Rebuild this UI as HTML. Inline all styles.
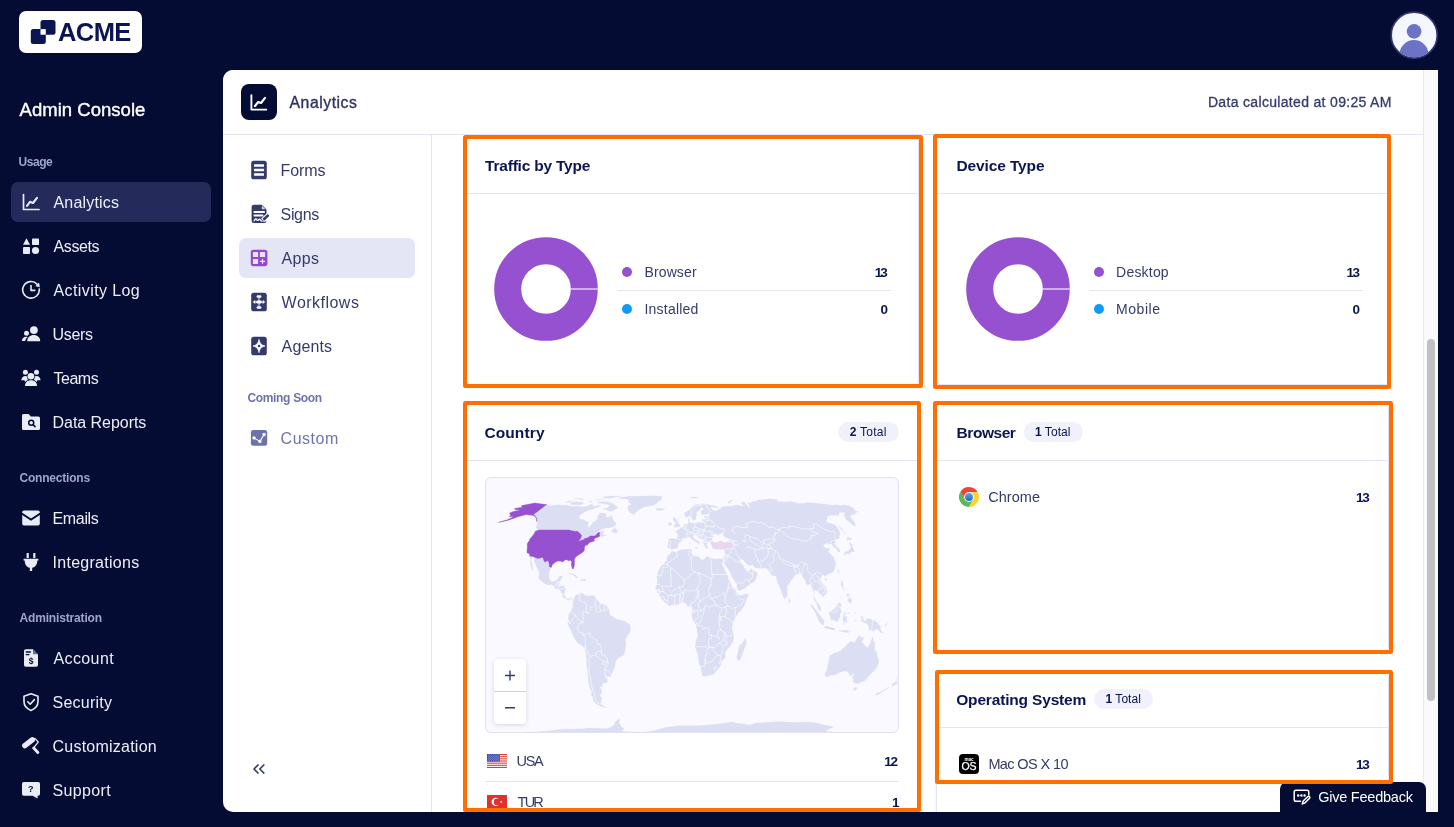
<!DOCTYPE html>
<html lang="en"><head><meta charset="utf-8"><title>Admin Console - Analytics</title>
<style>
*{box-sizing:border-box;margin:0;padding:0}
html,body{width:1454px;height:827px;overflow:hidden}
body{will-change:transform;background:#040c33;font-family:"Liberation Sans",sans-serif;position:relative;color:#343b6c}
.abs{position:absolute}

.logo{left:19px;top:11px;width:123px;height:42px;background:#fff;border-radius:7px}
.it{left:11px;width:200px;height:40px;border-radius:7px}
.it.on{background:#242b5b}
.it svg,.sn svg{position:absolute;left:10px;top:10px;width:20px;height:20px}
.panel{left:223px;top:70px;width:1215px;height:742px;background:#fff;border-radius:10px 0 0 10px;overflow:hidden}
.hdr{left:0;top:0;width:1215px;height:64px;background:#fff}
.hicon{left:18px;top:14px;width:36px;height:36px;border-radius:8px;background:#040c33}
.subnav{left:0;top:65px;width:209px;height:677px;border-right:1px solid #e3e5f5}
.sn{left:16px;width:176px;height:40px;border-radius:7px}
.sn.on{background:#e4e6f5}
.track{left:1200px;top:0;width:15px;height:742px;background:#fafafa;border-left:1px solid #e8e8e8}
.thumb{left:1204px;top:269px;width:8px;height:362px;border-radius:4px;background:#c1c1c1}
.card{background:#fff;border:1px solid #e3e5f5;border-radius:4px;box-shadow:0 2px 4px rgba(10,21,81,.06)}
.hl{border:4px solid #ff6f00;border-radius:2.5px}
.hr{height:1px;background:#e3e5f5}
.pill{height:20px;border-radius:10px;background:#f0f1fb}
.dot{width:10px;height:10px;border-radius:50%}
.fb{left:1057px;top:712px;width:146px;height:30px;background:#040c33;border-radius:7px 7px 0 0}
</style></head><body>

<!-- ===== Sidebar ===== -->
<div class="abs logo"><svg class="abs" style="left:11px;top:8px" width="26" height="26" viewBox="0 0 26 26"><rect x="0.8" y="10.1" width="15" height="15" rx="2.5" fill="#0a1551"/><rect x="10.5" y="0.9" width="15" height="14.800" rx="2.5" fill="#0a1551"/><rect x="10.5" y="10.1" width="5.3" height="5.600" fill="#fff"/></svg></div>
<span class="abs" style="left:57.90px;top:22px;font-size:25.5px;line-height:20px;letter-spacing:-0.533px;color:#0a1551;white-space:nowrap;font-weight:bold">ACME</span><span class="abs" style="left:19.60px;top:100px;font-size:18.5px;line-height:20px;letter-spacing:0.025px;color:#fff;white-space:nowrap;-webkit-text-stroke:0.4px #fff">Admin Console</span><span class="abs" style="left:18.50px;top:152px;font-size:12px;line-height:20px;letter-spacing:-0.450px;color:#9fa4ce;white-space:nowrap;font-weight:bold">Usage</span><div class="abs it on" style="top:182px"><svg viewBox="0 0 20 20"><g fill="none" stroke="#e9ebf7" stroke-width="1.7" stroke-linecap="round" stroke-linejoin="round"><path d="M2.5 2.5V17.5H18"/><path d="M6 13.8L9 9.8L12 11L16 5.8" stroke-width="2.1"/></g></svg></div><span class="abs" style="left:53.50px;top:193px;font-size:16px;line-height:20px;letter-spacing:0.175px;color:#eceef9;white-space:nowrap">Analytics</span><div class="abs it" style="top:226px"><svg viewBox="0 0 20 20"><g fill="#e9ebf7"><path d="M5.5 2.2L9 8.8H2Z"/><rect x="11" y="2.5" width="7" height="6.5" rx=".8"/><rect x="2" y="11" width="7" height="7" rx=".8"/><circle cx="14.5" cy="14.5" r="3.6"/></g></svg></div><span class="abs" style="left:53.50px;top:237px;font-size:16px;line-height:20px;letter-spacing:-0.380px;color:#eceef9;white-space:nowrap">Assets</span><div class="abs it" style="top:270px"><svg viewBox="0 0 20 20"><g fill="none" stroke="#e9ebf7" stroke-width="1.600" stroke-linecap="round" stroke-linejoin="round"><path d="M18.250 9A8.300 8.300 0 1 1 16 4.100"/><path d="M10 5.600V10.400H13.700"/></g><path d="M17.900 3.100L18.500 7L14.800 5.900Z" fill="#e9ebf7" stroke="#e9ebf7" stroke-width=".5" stroke-linejoin="round"/></svg></div><span class="abs" style="left:53.50px;top:281px;font-size:16px;line-height:20px;letter-spacing:0.400px;color:#eceef9;white-space:nowrap">Activity Log</span><div class="abs it" style="top:314px"><svg viewBox="0 0 20 20"><g fill="#e9ebf7"><circle cx="12.900" cy="6.100" r="3.900"/><path d="M6.200 17.300C6.200 13.400 9 11.100 12.700 11.100S19.200 13.400 19.200 17.300Z"/><circle cx="5.500" cy="9.300" r="2.500"/><path d="M0.900 17C1 14.500 2.600 12.800 5 12.800C5.600 12.800 6.200 12.900 6.600 13.100C5.200 14.200 4.500 15.600 4.300 17Z"/></g></svg></div><span class="abs" style="left:52.50px;top:325px;font-size:16px;line-height:20px;letter-spacing:-0.325px;color:#eceef9;white-space:nowrap">Users</span><div class="abs it" style="top:358px"><svg viewBox="0 0 20 20"><g fill="#e9ebf7"><circle cx="9.900" cy="8.300" r="3.300"/><path d="M4 17.900C4 14.400 6.500 12.300 10 12.300S16 14.400 16 17.900Z"/><circle cx="4.400" cy="4.300" r="2.500"/><circle cx="15.500" cy="4.300" r="2.500"/><path d="M0.300 12.200C0.500 9.600 2.100 7.900 4.400 7.900C5.100 7.900 5.700 8.100 6.200 8.400C6 9.800 6.400 11 7.200 11.900C5.900 12.300 4.900 13 4.100 14L3.500 12.200Z"/><path d="M19.600 12.200C19.400 9.600 17.800 7.900 15.500 7.900C14.800 7.900 14.200 8.100 13.700 8.400C13.900 9.800 13.500 11 12.700 11.900C14 12.300 15 13 15.800 14L16.400 12.200Z"/></g></svg></div><span class="abs" style="left:53.50px;top:369px;font-size:16px;line-height:20px;letter-spacing:-0.500px;color:#eceef9;white-space:nowrap">Teams</span><div class="abs it" style="top:402px"><svg viewBox="0 0 20 20"><path d="M1 3.6A1.6 1.6 0 0 1 2.6 2H7.6L9.8 4.6H17.4A1.6 1.6 0 0 1 19 6.2V16.4A1.6 1.6 0 0 1 17.400 18H2.6A1.6 1.6 0 0 1 1 16.4Z" fill="#e9ebf7"/><circle cx="10.2" cy="10.8" r="2.5" fill="none" stroke="#040c33" stroke-width="1.5"/><path d="M12.2 12.8L14 14.6" stroke="#040c33" stroke-width="1.6" stroke-linecap="round"/></svg></div><span class="abs" style="left:52.50px;top:413px;font-size:16px;line-height:20px;letter-spacing:-0.036px;color:#eceef9;white-space:nowrap">Data Reports</span><span class="abs" style="left:19.50px;top:468px;font-size:12px;line-height:20px;letter-spacing:-0.200px;color:#9fa4ce;white-space:nowrap;font-weight:bold">Connections</span><div class="abs it" style="top:498px"><svg viewBox="0 0 20 20"><g fill="#e9ebf7"><path d="M1.2 4.2A1.7 1.7 0 0 1 2.9 2.500H17.1A1.7 1.7 0 0 1 18.800 4.2V4.8L10 10.6L1.2 4.8Z"/><path d="M1.2 6.9L10 12.700L18.800 6.9V15.8A1.7 1.7 0 0 1 17.100 17.500H2.900A1.7 1.7 0 0 1 1.2 15.800Z"/></g></svg></div><span class="abs" style="left:52.50px;top:509px;font-size:16px;line-height:20px;letter-spacing:-0.340px;color:#eceef9;white-space:nowrap">Emails</span><div class="abs it" style="top:542px"><svg viewBox="0 0 20 20"><g fill="#e9ebf7"><rect x="5.6" y="1" width="2.2" height="5" rx=".6"/><rect x="12.200" y="1" width="2.2" height="5" rx=".6"/><path d="M2.6 6.700H17.400V8.600H16.3C16.3 12.800 14.200 15.200 11.200 15.800V19H8.800V15.800C5.800 15.200 3.700 12.800 3.700 8.600H2.600Z"/></g></svg></div><span class="abs" style="left:52.50px;top:553px;font-size:16px;line-height:20px;letter-spacing:0.282px;color:#eceef9;white-space:nowrap">Integrations</span><span class="abs" style="left:19.50px;top:608px;font-size:12px;line-height:20px;letter-spacing:-0.162px;color:#9fa4ce;white-space:nowrap;font-weight:bold">Administration</span><div class="abs it" style="top:638px"><svg viewBox="0 0 20 20"><path d="M3 3A1.800 1.800 0 0 1 4.800 1.200H12L17 6.200V17A1.800 1.800 0 0 1 15.200 18.800H4.800A1.800 1.800 0 0 1 3 17Z" fill="#e9ebf7"/><path d="M12 1.200V6.200H17Z" fill="#040c33" opacity=".55"/><path d="M5.200 4H9.500M5.200 6.600H8" stroke="#040c33" stroke-width="1.300" stroke-linecap="round"/><text x="10" y="16.300" font-family="Liberation Sans,sans-serif" font-size="8.5" font-weight="bold" fill="#040c33" text-anchor="middle">$</text></svg></div><span class="abs" style="left:53.50px;top:649px;font-size:16px;line-height:20px;letter-spacing:0.383px;color:#eceef9;white-space:nowrap">Account</span><div class="abs it" style="top:682px"><svg viewBox="0 0 20 20"><g fill="none" stroke="#e9ebf7" stroke-width="1.600" stroke-linecap="round" stroke-linejoin="round"><path d="M10 1.800L17 4.300V9.500C17 13.800 14.200 16.800 10 18.400C5.800 16.800 3 13.800 3 9.500V4.300Z"/><path d="M6.800 9.800L9.200 12.200L13.400 7.600"/></g></svg></div><span class="abs" style="left:52.50px;top:693px;font-size:16px;line-height:20px;letter-spacing:0.229px;color:#eceef9;white-space:nowrap">Security</span><div class="abs it" style="top:726px"><svg viewBox="0 0 20 20"><g fill="none" stroke="#e9ebf7" stroke-linecap="round" stroke-linejoin="round"><path d="M3.8 9.6L11.2 3.8" stroke-width="5.4"/><path d="M12.8 2.3L14.2 2.6L17.3 6.1L13.4 10.8" stroke-width="1.300"/><path d="M12.700 12.100L16.900 16.500" stroke-width="2.900"/></g></svg></div><span class="abs" style="left:52.50px;top:737px;font-size:16px;line-height:20px;letter-spacing:0.233px;color:#eceef9;white-space:nowrap">Customization</span><div class="abs it" style="top:770px"><svg viewBox="0 0 20 20"><path d="M1 3.800A1.800 1.800 0 0 1 2.800 2H17.200A1.800 1.800 0 0 1 19 3.800V13.900A1.800 1.800 0 0 1 17.200 15.700H16.600V18.600L11.600 15.700H2.800A1.800 1.800 0 0 1 1 13.900Z" fill="#e9ebf7"/><text x="9.800" y="12.400" font-family="Liberation Sans,sans-serif" font-size="9" font-weight="bold" fill="#040c33" text-anchor="middle">?</text></svg></div><span class="abs" style="left:52.50px;top:781px;font-size:16px;line-height:20px;letter-spacing:0.367px;color:#eceef9;white-space:nowrap">Support</span>

<!-- avatar -->
<svg class="abs" style="left:1390px;top:11px" width="48" height="48" viewBox="0 0 48 48"><defs><clipPath id="av"><circle cx="24.2" cy="24.2" r="22.2"/></clipPath></defs><circle cx="24.2" cy="24.2" r="23" fill="#f4f7fe" stroke="#34366f" stroke-width="1.7"/><g clip-path="url(#av)" fill="#6c73c6"><circle cx="24.1" cy="20.4" r="7.3"/><circle cx="24" cy="43.700" r="14.600"/></g></svg>

<!-- ===== Panel ===== -->
<div class="abs panel">
 <div class="abs subnav"><div class="abs sn" style="top:15px"><svg viewBox="0 0 20 20"><rect x="2.200" y="0.700" width="15.600" height="18.600" rx="2.600" fill="#343b6c"/><g fill="#fff"><rect x="5" y="4.300" width="10" height="2.400" rx=".5"/><rect x="5" y="8.800" width="10" height="2.400" rx=".5"/><rect x="5" y="13.300" width="10" height="2.400" rx=".5"/></g></svg></div><span class="abs" style="left:57.60px;top:26px;font-size:16px;line-height:20px;letter-spacing:-0.075px;color:#343b6c;white-space:nowrap">Forms</span><div class="abs sn" style="top:59px"><svg viewBox="0 0 20 20"><path d="M2.600 3A2.300 2.300 0 0 1 4.900 0.700H12.800L17.500 5.400V16.700A2.300 2.300 0 0 1 15.200 19H4.900A2.300 2.300 0 0 1 2.600 16.700Z" fill="#343b6c"/><path d="M12.900 1.700V5.300H16.500Z" fill="#fff" opacity=".8"/><path d="M5.400 8H15M5.400 11.600H13.400" stroke="#fff" stroke-width="2" stroke-linecap="round"/><path d="M5.200 16.800C6.200 14.500 7.300 14.300 7.700 15.700C8.100 16.900 9.100 16.300 10 15.300C10.600 14.800 11.100 15.700 11.700 16.600H17.500" stroke="#fff" stroke-width="1.300" fill="none" stroke-linecap="round" stroke-linejoin="round"/><path d="M13.700 16.300L19.700 10.700" stroke="#fff" stroke-width="4.600" stroke-linecap="butt"/><path d="M14.400 15.700L19.600 10.900" stroke="#343b6c" stroke-width="2.700"/><path d="M12.500 17.500L13.200 15L15.100 16.900Z" fill="#343b6c" stroke="#fff" stroke-width=".5"/></svg></div><span class="abs" style="left:57.60px;top:70px;font-size:16px;line-height:20px;letter-spacing:-0.350px;color:#343b6c;white-space:nowrap">Signs</span><div class="abs sn on" style="top:103px"><svg viewBox="0 0 20 20"><rect x="1.800" y="1.800" width="16.600" height="16.400" rx="2.600" fill="#9548cf"/><g fill="#e7e4f7"><rect x="3.900" y="4.100" width="5.200" height="5" rx=".6"/><rect x="10.900" y="4.100" width="5.200" height="5" rx=".6"/><rect x="3.900" y="10.900" width="5.200" height="5" rx=".6"/></g><path d="M13.500 11.300V15.500M11.400 13.400H15.600" stroke="#efe6fa" stroke-width="1.150" stroke-linecap="round"/></svg></div><span class="abs" style="left:58.60px;top:114px;font-size:16px;line-height:20px;letter-spacing:0.300px;color:#343b6c;white-space:nowrap">Apps</span><div class="abs sn" style="top:147px"><svg viewBox="0 0 20 20"><rect x="2.200" y="0.700" width="15.600" height="18.600" rx="2.600" fill="#343b6c"/><g fill="#fff"><rect x="7.600" y="3.300" width="4.800" height="2.500" rx="1.200"/><rect x="7.600" y="14.200" width="4.800" height="2.500" rx="1.200"/><rect x="7.400" y="8.500" width="5.200" height="3" rx=".7"/><path d="M3.700 10L6.300 8.100V11.900ZM16.300 10L13.700 8.100V11.900Z"/><rect x="9.550" y="5.500" width=".9" height="9"/><rect x="6" y="9.550" width="8" height=".9"/></g></svg></div><span class="abs" style="left:58.60px;top:158px;font-size:16px;line-height:20px;letter-spacing:0.475px;color:#343b6c;white-space:nowrap">Workflows</span><div class="abs sn" style="top:191px"><svg viewBox="0 0 20 20"><rect x="2.200" y="0.700" width="15.600" height="18.600" rx="2.600" fill="#343b6c"/><path d="M10 3.300C10.900 7.400 12 8.800 16 10C12 11.200 10.900 12.600 10 16.700C9.100 12.600 8 11.200 4 10C8 8.800 9.100 7.400 10 3.300Z" fill="#fff" stroke="#fff" stroke-width=".7" stroke-linejoin="round"/><circle cx="10" cy="10" r="1.250" fill="#343b6c"/></svg></div><span class="abs" style="left:58.60px;top:202px;font-size:16px;line-height:20px;letter-spacing:0.120px;color:#343b6c;white-space:nowrap">Agents</span><span class="abs" style="left:24.40px;top:253px;font-size:12px;line-height:20px;letter-spacing:-0.320px;color:#6c73b1;white-space:nowrap;font-weight:bold">Coming Soon</span><div class="abs sn" style="top:283px"><svg viewBox="0 0 20 20"><rect x="1.900" y="1.900" width="16.300" height="15.900" rx="2.400" fill="#6c73ab"/><path d="M5 9.900L10.900 13.400L15.100 6.500" stroke="#fff" stroke-width="1.100" fill="none" stroke-linecap="round" stroke-linejoin="round"/><circle cx="5" cy="9.900" r="1.700" fill="#fff"/><circle cx="10.900" cy="13.400" r="1.700" fill="#fff"/><circle cx="15.100" cy="6.500" r="1.700" fill="#fff"/></svg></div><span class="abs" style="left:57.60px;top:294px;font-size:16px;line-height:20px;letter-spacing:0.500px;color:#6c73b1;white-space:nowrap">Custom</span><svg class="abs" style="left:29px;top:628px" width="14" height="12" viewBox="0 0 14 12" fill="none" stroke="#343b6c" stroke-width="1.7" stroke-linecap="round" stroke-linejoin="round"><path d="M6 2L2 6L6 10M11.800 2L7.800 6L11.800 10"/></svg></div>
 <div class="abs" style="left:0;top:64px;width:1215px;height:1px;background:#e3e5f5"></div>
 <div class="abs" style="left:209px;top:64px;width:991px;height:678px;overflow:hidden"><div class="abs card" style="left:34px;top:3px;width:453px;height:248px"></div><div class="abs card" style="left:504px;top:3px;width:453px;height:248px"></div><div class="abs card" style="left:34px;top:270px;width:453px;height:500px"></div><div class="abs card" style="left:504px;top:270px;width:453px;height:247px"></div><div class="abs card" style="left:504px;top:538px;width:453px;height:200px"></div><span class="abs" style="left:53.10px;top:22px;font-size:15.5px;line-height:20px;letter-spacing:-0.214px;color:#0a1551;white-space:nowrap;font-weight:bold">Traffic by Type</span><div class="abs hr" style="left:35px;top:59px;width:452px"></div><svg class="abs" style="left:60.8px;top:101.8px" width="106" height="106" viewBox="-53 -53 106 106"><circle r="38.3" fill="none" stroke="#9651d0" stroke-width="27"/><rect x="24" y="-0.6" width="29" height="1.2" fill="#f3e9fb"/></svg><div class="abs dot" style="left:190px;top:133px;background:#9651d0"></div><span class="abs" style="left:212.50px;top:128px;font-size:14px;line-height:20px;letter-spacing:0.117px;color:#343b6c;white-space:nowrap">Browser</span><span class="abs" style="left:442.70px;top:129px;font-size:13.5px;line-height:20px;letter-spacing:-1.900px;color:#0a1551;white-space:nowrap;font-weight:bold">13</span><div class="abs hr" style="left:185px;top:156px;width:274px"></div><div class="abs dot" style="left:190px;top:170.2px;background:#0e9bf7"></div><span class="abs" style="left:212.50px;top:165px;font-size:14px;line-height:20px;letter-spacing:0.213px;color:#343b6c;white-space:nowrap">Installed</span><span class="abs" style="left:448.50px;top:166px;font-size:13.5px;line-height:20px;letter-spacing:0.000px;color:#0a1551;white-space:nowrap;font-weight:bold">0</span><span class="abs" style="left:524.50px;top:22px;font-size:15.5px;line-height:20px;letter-spacing:-0.130px;color:#0a1551;white-space:nowrap;font-weight:bold">Device Type</span><div class="abs hr" style="left:505px;top:59px;width:451px"></div><svg class="abs" style="left:532.8px;top:101.8px" width="106" height="106" viewBox="-53 -53 106 106"><circle r="38.3" fill="none" stroke="#9651d0" stroke-width="27"/><rect x="24" y="-0.6" width="29" height="1.2" fill="#f3e9fb"/></svg><div class="abs dot" style="left:662px;top:133px;background:#9651d0"></div><span class="abs" style="left:684.10px;top:128px;font-size:14px;line-height:20px;letter-spacing:0.200px;color:#343b6c;white-space:nowrap">Desktop</span><span class="abs" style="left:914.60px;top:129px;font-size:13.5px;line-height:20px;letter-spacing:-1.700px;color:#0a1551;white-space:nowrap;font-weight:bold">13</span><div class="abs hr" style="left:657px;top:156px;width:274px"></div><div class="abs dot" style="left:662px;top:170.2px;background:#0e9bf7"></div><span class="abs" style="left:684.10px;top:165px;font-size:14px;line-height:20px;letter-spacing:0.520px;color:#343b6c;white-space:nowrap">Mobile</span><span class="abs" style="left:920.55px;top:166px;font-size:13.5px;line-height:20px;letter-spacing:0.000px;color:#0a1551;white-space:nowrap;font-weight:bold">0</span><span class="abs" style="left:52.40px;top:289px;font-size:15.5px;line-height:20px;letter-spacing:0.117px;color:#0a1551;white-space:nowrap;font-weight:bold">Country</span><div class="abs pill" style="left:406px;top:288px;width:61px"></div><span class="abs" style="left:417.80px;top:288px;font-size:12px;line-height:20px;letter-spacing:0.250px;color:#0a1551;white-space:nowrap"><b>2</b> Total</span><div class="abs hr" style="left:35px;top:326px;width:451px"></div><div class="abs" style="left:53px;top:343px;width:414px;height:256px;border:1px solid #e1e2f6;border-radius:6px;background:#faf9ff;overflow:hidden"><svg class="abs" style="left:0;top:0" width="412" height="254" viewBox="0 0 412 254"><path d="M48.7,25.0L52.1,25.5L55.8,26.0L60.6,26.6L64.5,27.2L68.0,26.7L73.3,26.2L75.5,26.7L79.6,26.4L83.7,27.7L87.9,28.2L90.3,27.7L93.0,27.9L96.3,28.4L100.6,27.9L103.2,26.7L106.4,24.9L106.9,26.2L106.9,27.2L109.3,27.7L112.1,26.7L112.6,27.2L115.8,26.7L115.5,27.7L112.4,29.7L109.0,30.2L106.7,31.8L103.2,32.4L98.3,34.7L94.8,37.1L93.7,38.6L94.1,40.9L96.8,40.9L98.4,41.6L100.6,43.2L103.4,43.4L102.1,46.3L102.4,48.7L103.7,48.4L106.0,45.6L106.1,44.0L109.9,42.2L111.6,40.3L110.5,38.6L112.5,37.1L113.8,34.4L117.9,34.4L121.0,35.9L120.0,38.4L123.6,38.6L126.1,36.8L127.0,40.3L127.9,42.9L130.0,44.2L130.6,47.0L128.9,48.4L124.9,50.1L120.3,50.3L116.3,51.6L112.5,53.8L118.4,52.0L118.1,54.2L116.7,56.5L121.3,56.8L122.8,55.7L121.0,57.7L117.7,58.8L114.1,60.3L115.0,58.0L113.7,58.3L110.9,59.4L109.2,60.1L108.0,61.5L108.4,63.0L106.8,63.4L103.7,64.4L102.8,65.0L101.9,66.6L100.5,67.8L100.4,66.6L99.5,66.9L98.6,69.1L98.4,70.7L98.2,72.7L96.7,74.3L94.5,75.7L92.4,77.0L89.7,78.9L88.4,81.2L88.4,85.0L88.3,88.0L87.2,90.8L86.3,90.8L85.9,88.9L85.3,86.2L85.8,84.2L84.7,82.3L82.7,82.8L80.8,81.8L78.7,81.9L77.3,83.7L75.9,83.8L74.4,83.1L71.9,83.0L69.8,84.0L66.4,86.4L65.3,89.4L63.2,95.6L63.4,99.1L64.2,101.8L65.9,103.3L69.4,102.5L71.4,100.9L72.4,98.2L75.8,97.2L77.1,97.5L75.7,100.9L74.7,103.1L73.3,107.2L76.6,107.6L79.9,108.5L79.2,113.6L78.7,116.4L80.0,119.5L82.0,120.4L84.1,119.1L86.7,120.8L86.9,122.8L85.5,122.8L84.0,120.4L82.5,123.2L80.5,121.5L78.5,121.0L76.0,118.2L75.6,115.5L73.9,112.7L71.3,111.8L68.7,110.9L66.5,107.6L64.5,107.2L61.8,107.6L58.7,106.0L55.8,103.6L52.8,101.8L52.1,99.1L53.0,95.6L51.9,92.4L50.1,89.4L49.2,86.2L47.7,83.3L48.2,80.4L46.4,79.5L45.4,82.4L46.4,85.9L47.2,90.3L47.5,94.7L46.7,94.1L45.6,91.1L44.7,88.0L43.8,85.0L44.0,81.9L43.9,78.2L43.4,75.7L41.0,74.8L41.1,71.3L41.4,69.4L41.2,66.9L41.5,65.3L43.4,62.6L43.9,61.1L47.9,56.2L49.5,52.9L52.1,52.0L50.9,50.5L49.3,49.1L50.5,47.0L50.8,44.2L50.9,42.5L50.5,40.3L49.2,39.0L47.8,37.5L43.5,37.1L40.2,36.5L34.5,38.1L31.3,39.0L26.6,40.7L22.1,42.2L16.7,43.6L12.5,44.4L15.9,43.3L20.8,42.0L26.3,39.6L27.1,38.6L23.2,38.7L24.9,37.1L23.5,35.9L24.2,34.7L27.4,33.5L32.3,32.6L33.6,31.7L29.5,31.8L28.4,30.6L33.4,29.7L36.5,29.3L36.0,28.7L35.3,27.7L39.8,26.7L46.5,25.5ZM120.8,23.2L123.7,24.0L127.2,25.3L129.0,26.7L132.7,29.7L129.8,31.3L126.4,33.5L124.1,34.1L121.8,33.0L119.6,31.8L116.1,31.8L116.8,30.2L121.5,29.2L123.5,27.7L120.8,26.4L118.1,26.2L113.9,25.8L111.0,24.9L112.7,23.2L116.3,23.2ZM86.9,23.6L90.2,23.2L95.1,23.6L97.3,24.0L98.1,25.8L94.7,27.2L89.0,27.2L83.9,26.7L83.8,25.3ZM78.5,24.4L82.6,22.8L88.5,22.4L88.4,23.2L82.5,24.9L79.8,24.9ZM114.1,20.9L118.8,20.6L124.9,20.6L128.6,19.4L135.1,18.8L140.9,17.9L134.5,17.5L126.2,17.5L117.2,18.1L117.8,19.1ZM108.5,22.0L112.6,22.4L121.7,22.2L122.4,21.4L113.9,21.1L109.7,20.9ZM87.4,21.3L95.2,22.0L99.7,21.3L96.1,20.0L88.8,20.3ZM102.3,23.6L105.0,24.4L106.8,22.8L103.7,22.4ZM124.7,53.8L127.7,55.0L131.1,55.3L132.2,52.7L129.7,50.8L130.0,48.4L127.5,50.5ZM79.9,96.4L84.3,94.7L88.1,95.6L92.1,98.8L93.7,99.7L89.9,100.2L88.8,98.8L86.5,96.8L82.6,96.4ZM93.0,102.7L96.5,100.4L99.2,100.4L101.0,102.5L98.8,103.3L96.1,103.4ZM129.9,19.8L135.1,18.8L142.6,17.9L155.2,17.7L166.2,17.3L174.4,17.8L177.5,18.8L175.4,20.6L175.9,22.0L172.8,24.0L170.5,25.8L167.2,27.7L161.2,28.7L155.8,30.2L151.8,33.0L147.7,37.1L145.5,36.1L143.0,34.7L142.1,32.4L141.4,29.7L141.8,27.2L145.2,26.2L142.3,24.9L142.4,23.2L141.6,21.6L135.7,21.3L131.9,20.6ZM169.3,30.8L171.5,29.8L175.3,30.0L178.7,30.2L179.5,31.3L176.9,32.4L173.8,33.1L170.4,32.5ZM202.2,19.4L206.4,18.8L211.4,18.7L215.7,18.8L211.8,20.0L208.5,20.8L204.9,20.3ZM240.8,25.3L242.6,23.6L244.3,22.0L249.6,20.9L252.3,20.9L247.8,22.0L244.6,24.0L245.6,25.6L242.3,25.5ZM87.0,121.0L89.8,116.7L93.3,115.5L95.5,114.0L97.4,115.5L100.0,117.3L105.4,117.3L108.2,116.9L110.7,121.0L114.6,125.6L118.7,126.0L122.0,128.7L124.0,133.9L124.0,136.7L126.8,138.2L131.6,141.0L136.4,142.1L140.6,143.7L144.3,146.5L145.1,150.6L144.3,154.3L141.7,157.9L139.9,161.6L140.2,167.1L139.5,172.5L138.4,177.0L135.9,178.7L132.8,180.1L129.9,183.1L129.6,187.5L128.0,191.8L126.2,196.1L124.9,198.9L121.8,199.1L119.1,197.7L121.7,201.6L121.7,204.7L116.7,206.0L117.2,208.9L114.0,209.2L116.2,212.0L115.8,215.4L114.0,217.4L116.7,219.9L115.2,223.1L115.8,225.7L117.2,227.1L121.5,229.6L118.5,230.2L114.4,228.5L110.6,226.4L107.1,222.9L106.2,218.4L104.4,216.9L105.5,213.9L103.4,210.0L102.6,206.0L101.8,202.7L101.9,197.7L101.2,192.7L100.2,187.5L100.2,182.3L99.3,175.2L98.4,170.3L95.8,168.0L91.4,165.2L89.3,162.2L87.3,158.9L84.7,152.4L81.9,147.8L81.1,145.0L82.8,142.6L81.7,140.8L82.3,137.6L82.7,135.2L84.4,133.9L86.3,129.3L86.5,124.7ZM185.4,72.7L190.3,73.7L194.0,71.5L199.0,71.0L204.0,70.4L206.5,70.9L205.6,74.8L206.7,76.8L209.3,77.5L212.3,78.5L215.9,81.6L218.4,80.7L220.1,77.7L222.7,78.7L224.7,79.5L229.9,80.7L232.4,79.9L234.1,80.4L236.5,80.2L237.8,83.3L236.3,85.9L238.8,91.1L240.0,93.8L242.0,97.3L242.8,101.8L244.5,103.6L246.2,108.2L248.4,110.0L251.3,113.3L251.8,115.5L254.2,117.3L258.2,116.0L262.5,114.9L262.4,117.7L260.6,122.8L258.7,127.4L256.1,131.5L252.6,135.2L249.9,139.9L247.8,143.2L246.3,148.7L246.8,153.3L248.1,156.5L247.7,163.4L244.7,168.0L241.7,171.2L239.5,174.3L239.7,179.6L236.1,183.1L235.5,186.6L233.4,190.1L230.5,193.5L227.0,196.9L223.1,197.7L217.9,199.1L215.9,197.7L215.7,195.2L214.1,188.9L212.4,184.9L212.0,178.7L210.2,173.4L208.7,168.9L209.5,162.5L211.5,157.9L210.6,152.4L209.3,146.9L207.9,144.1L205.9,140.4L205.2,136.7L206.0,132.1L205.9,129.3L204.5,128.4L201.7,128.7L199.0,125.2L195.5,125.0L191.4,127.1L188.7,127.4L185.9,127.3L182.5,128.5L179.8,125.6L177.0,123.7L175.0,120.4L173.0,117.3L170.3,114.0L169.1,109.6L170.5,106.3L171.1,101.8L170.2,98.2L171.7,93.8L173.4,90.3L175.9,86.4L178.6,84.5L180.2,82.4L180.4,79.9L182.0,76.8L184.2,75.3ZM259.9,158.9L260.8,165.2L259.4,168.9L256.3,177.0L254.6,182.3L251.8,183.1L250.3,179.6L251.5,174.3L252.5,168.0L255.6,165.6L258.0,161.6ZM181.1,67.9L182.2,63.4L181.8,60.8L185.7,60.1L190.7,60.5L191.4,56.5L189.9,54.2L187.3,52.9L191.1,52.4L190.8,51.0L193.0,51.3L194.6,49.3L197.3,47.7L198.3,45.9L202.1,45.2L201.7,42.9L201.7,40.9L203.9,40.0L203.8,42.2L204.6,44.9L206.5,44.4L208.5,45.1L212.9,43.8L214.7,44.4L215.6,43.2L215.2,40.9L218.3,40.3L217.4,38.1L222.0,37.7L223.9,37.1L221.6,36.4L216.6,37.1L214.9,35.9L214.2,33.5L217.4,31.1L216.2,30.4L214.3,30.8L213.7,32.4L211.0,34.1L210.5,35.9L212.0,37.1L210.2,39.0L210.5,41.6L208.2,42.5L206.7,42.9L205.0,39.6L203.8,38.0L201.8,39.4L199.7,39.6L198.0,37.1L197.9,34.7L200.3,33.2L203.2,31.8L205.4,29.7L207.0,27.7L210.1,26.2L214.1,25.5L218.6,25.2L221.7,25.9L223.8,26.7L227.7,27.2L232.1,28.7L232.6,29.9L229.7,30.0L225.6,29.4L225.0,30.2L227.5,32.1L230.1,32.4L232.3,31.5L232.3,30.2L235.5,29.9L234.8,28.2L237.1,28.2L240.4,28.0L244.0,27.7L247.6,27.4L249.9,26.5L254.1,27.2L257.3,27.7L254.7,25.3L254.9,23.7L258.5,23.7L260.5,26.2L262.6,28.7L263.8,28.7L260.9,24.4L263.2,24.4L266.0,24.0L264.8,23.2L270.7,22.8L269.8,21.9L276.3,21.3L280.3,20.9L282.8,20.2L287.1,20.8L292.1,21.3L294.0,22.8L291.3,22.8L295.0,23.2L300.5,23.6L304.2,23.0L308.3,24.0L312.9,25.3L315.0,24.9L319.6,24.9L320.1,24.0L325.9,24.2L330.7,24.9L334.2,25.3L340.5,25.8L343.5,26.7L347.7,26.7L351.5,26.2L354.2,27.2L357.5,26.4L362.7,27.2L370.0,31.3L368.0,31.8L373.7,34.1L369.9,34.9L369.0,37.1L364.9,37.1L365.1,39.6L368.1,42.9L369.9,46.3L369.5,49.1L365.4,46.3L359.5,41.6L358.8,39.6L357.8,36.5L358.4,34.7L353.6,34.9L353.2,37.7L348.0,37.7L342.1,38.0L341.5,40.3L340.4,43.8L344.2,44.9L348.8,46.3L350.8,48.4L353.6,52.7L354.3,55.7L353.7,59.5L352.1,61.4L349.4,61.9L349.7,64.2L348.5,66.1L352.9,69.9L354.7,73.2L353.1,74.5L351.4,74.0L349.9,70.7L347.3,69.4L345.7,66.6L343.1,66.3L341.9,67.4L341.1,65.0L338.5,66.9L337.5,67.9L340.1,69.9L342.6,69.9L344.9,70.7L343.3,72.3L342.8,74.0L345.3,76.5L348.2,79.4L349.2,82.4L350.2,85.0L349.6,88.5L348.7,91.7L347.0,94.7L344.0,95.7L341.1,97.3L339.3,98.2L339.0,99.5L337.0,97.0L335.3,99.1L334.6,101.8L336.9,105.4L340.0,108.7L341.5,113.6L340.1,116.4L338.2,117.7L336.5,120.4L335.9,117.8L333.2,116.0L332.0,114.0L330.1,112.7L328.6,112.2L328.4,115.5L328.5,119.1L330.5,122.8L332.7,125.0L334.7,128.4L335.1,132.1L336.1,134.1L335.0,134.1L332.1,131.5L330.7,127.4L329.2,123.7L327.3,121.0L327.2,117.3L326.8,113.6L325.0,109.1L324.3,106.2L321.8,107.4L320.0,106.3L318.8,102.2L315.7,98.2L314.5,95.6L312.8,95.9L311.0,96.8L308.6,97.7L308.4,100.0L306.5,100.9L303.9,105.4L301.3,107.8L301.7,111.8L301.7,117.7L299.8,120.2L298.9,121.9L297.4,120.1L295.7,115.5L293.7,110.0L291.9,106.3L290.3,101.5L289.8,98.2L288.7,98.2L286.8,98.6L284.3,95.9L282.8,93.4L281.3,91.5L280.0,90.4L274.2,90.8L268.9,90.3L267.1,87.6L265.7,87.3L264.0,88.5L261.1,86.8L258.5,84.2L257.1,81.9L255.1,81.9L254.4,82.8L256.2,85.9L258.1,88.2L258.8,90.3L260.4,89.9L260.6,92.0L263.3,92.5L266.1,89.4L267.2,92.0L270.3,93.8L272.1,95.6L270.8,99.1L270.1,101.8L267.5,104.5L263.0,107.2L258.6,110.9L254.0,113.1L251.9,113.3L250.7,110.0L250.1,106.3L247.7,101.8L245.0,98.2L243.7,93.8L241.3,90.3L238.2,85.9L237.8,83.3L236.5,80.2L237.2,77.3L238.0,74.0L237.6,71.2L235.2,71.8L232.6,71.5L230.8,71.8L228.9,71.2L226.7,70.7L225.4,68.2L225.5,65.8L227.9,64.2L230.9,63.9L234.9,62.6L238.8,64.2L242.9,63.4L242.5,61.5L239.1,59.5L237.1,58.3L237.0,55.0L233.8,56.5L232.3,58.0L230.2,56.0L228.5,56.5L227.8,57.7L226.8,60.3L226.5,62.6L227.7,63.9L225.0,65.0L221.9,64.5L221.5,65.8L220.7,66.6L222.4,69.1L221.4,71.5L219.8,71.0L218.6,68.2L216.5,65.3L216.3,63.0L213.7,61.1L210.6,58.8L209.0,57.7L207.3,57.5L207.6,59.5L209.3,61.1L212.1,62.6L215.3,65.5L213.5,65.0L213.0,67.4L212.5,69.1L212.1,69.1L212.4,66.6L209.8,64.2L207.6,63.1L205.4,61.2L203.2,58.9L201.7,59.8L198.8,60.6L196.6,60.8L196.7,63.0L193.8,64.5L192.4,66.6L192.9,67.9L191.8,69.5L190.1,71.0L187.2,71.2L185.8,72.3L184.8,70.9L183.5,70.5L181.8,70.7ZM186.6,50.5L189.4,49.7L194.3,48.8L194.7,46.7L193.0,45.9L192.5,44.2L191.0,42.6L190.4,41.6L190.9,40.3L188.6,40.0L189.6,38.9L187.5,38.9L186.4,40.3L186.9,42.2L187.6,43.8L189.5,44.9L189.3,45.9L187.8,46.0L188.0,47.3L187.0,48.0L188.9,48.5L188.0,49.1ZM181.6,48.0L185.8,47.4L186.2,44.9L184.7,43.3L181.9,44.7L182.3,46.3ZM202.9,64.2L204.3,63.9L204.7,67.1L203.2,67.4ZM203.1,61.2L204.2,61.4L204.0,63.4L203.3,63.1ZM208.2,69.1L211.9,68.7L211.7,71.2L208.5,69.9ZM222.2,73.2L225.6,73.5L225.5,74.2L222.4,73.7ZM233.4,74.0L236.0,73.0L235.5,74.2L233.7,74.7ZM357.5,76.5L360.4,80.2L359.6,76.0L363.4,76.2L365.1,74.5L367.3,74.0L368.9,72.8L366.8,69.1L366.5,66.6L363.9,63.8L362.4,64.2L364.3,67.4L364.5,70.2L362.6,70.7L362.8,72.7L359.3,73.2L357.8,75.0ZM361.6,63.0L362.6,61.9L365.3,62.6L366.4,60.6L363.8,59.5L359.8,57.4L361.4,60.3L360.2,61.1ZM359.0,56.5L359.8,55.3L356.4,52.0L357.9,51.7L352.6,47.7L349.4,44.7L349.3,45.6L354.0,50.5ZM351.9,94.7L351.7,90.8L353.0,91.1L353.6,94.7L353.2,96.4ZM302.1,121.9L302.4,118.6L303.9,121.0L304.9,123.7L303.9,125.2L302.6,125.6ZM338.4,101.5L339.1,100.0L341.2,100.4L341.0,102.4L339.8,103.3ZM323.6,126.3L326.7,127.1L331.0,132.6L335.2,138.6L338.5,142.3L338.0,147.4L336.2,147.4L333.0,144.1L331.1,139.5L328.6,133.9L326.1,130.2ZM337.2,149.3L339.6,147.8L344.4,148.7L347.5,149.5L349.6,151.1L349.2,152.6L344.8,152.1L340.7,151.1ZM342.7,133.9L344.1,133.4L346.1,132.1L348.2,130.8L350.7,127.4L352.9,123.7L354.7,125.6L356.2,127.1L354.7,128.9L355.1,132.1L356.5,134.8L354.5,135.2L354.5,138.6L353.0,141.3L352.2,144.1L350.2,144.1L348.2,142.8L346.1,142.6L344.3,141.9L344.1,139.1L342.8,136.7ZM357.2,135.8L358.6,134.3L362.0,134.8L364.8,133.7L364.1,136.0L360.7,135.8L358.6,136.7L360.0,138.6L362.4,138.4L360.6,140.4L361.6,144.1L360.4,146.0L359.1,143.2L358.2,146.9L356.9,146.9L357.1,143.2L356.5,141.3ZM373.0,138.2L376.5,138.0L378.4,142.8L381.9,139.9L386.7,141.5L391.4,143.9L393.2,146.9L395.6,148.4L394.3,149.7L395.9,153.3L398.3,155.7L394.9,155.6L392.6,152.4L390.1,151.0L387.7,153.7L385.6,153.5L383.1,151.9L381.9,150.6L382.8,148.7L381.0,146.0L378.3,144.9L375.6,144.1L374.3,141.9L376.4,141.1L375.1,139.9ZM354.5,102.7L356.5,102.7L357.7,106.3L357.4,110.0L360.9,111.8L361.5,113.6L359.1,111.8L356.7,111.2L355.7,109.4L354.8,106.9ZM360.1,123.7L361.8,121.0L364.3,118.8L366.0,121.9L365.7,125.0L364.8,126.0L362.9,124.7L361.3,122.8ZM360.0,117.3L361.1,115.5L363.9,116.0L363.5,118.2L361.6,119.1ZM353.5,120.1L355.7,115.8L355.3,118.2L354.0,121.0ZM351.6,152.4L355.7,152.1L361.2,152.1L363.9,152.4L366.6,152.4L362.2,155.2L356.8,154.3L352.1,153.3ZM368.2,133.4L369.6,133.9L368.9,137.6L368.2,135.8ZM366.0,142.6L368.8,142.1L372.2,142.6L369.4,143.4ZM398.7,146.9L401.7,144.5L402.0,146.0L399.3,148.2L396.6,147.4ZM343.5,177.0L342.0,184.0L340.8,191.0L338.3,196.9L340.3,199.4L344.3,197.7L348.7,197.6L353.2,194.9L357.6,193.7L360.5,193.5L363.0,195.7L363.1,199.1L365.1,197.7L367.8,195.7L365.3,200.2L367.2,200.7L366.6,204.3L369.1,205.6L372.3,206.0L375.7,204.0L378.7,203.2L382.1,199.4L385.0,196.1L388.1,193.5L391.7,188.4L393.4,183.1L392.3,179.6L391.2,177.3L391.2,173.4L388.8,171.6L389.3,167.6L389.1,164.0L387.4,162.5L387.5,157.0L385.7,159.8L384.3,164.3L381.8,168.9L379.9,168.5L378.5,166.2L376.3,164.0L378.6,158.9L376.5,159.2L373.4,157.6L371.1,159.2L368.6,164.0L366.4,163.8L364.8,162.5L361.8,165.2L359.0,168.5L357.0,169.8L354.7,172.5L351.0,173.9L348.1,174.8L344.9,176.6ZM368.5,208.7L370.2,209.3L372.6,209.0L369.8,212.3L367.3,213.3L367.0,211.5ZM410.3,198.4L411.3,199.9L410.9,202.4L410.6,203.7L413.4,203.7L410.7,206.3L408.4,207.6L404.4,210.1L404.9,208.9L405.7,206.5L408.4,204.3L410.1,201.9ZM402.7,208.4L403.2,210.0L399.7,212.3L396.2,214.2L392.8,216.8L389.8,217.8L388.1,216.9L390.6,215.1L393.8,213.6L398.0,211.5L401.5,209.2ZM411.9,173.4L414.2,176.1L414.3,177.5L412.4,175.7ZM37.5,253.4L50.4,253.4L61.6,252.5L72.5,251.0L85.3,250.6L98.3,250.2L101.8,249.4L111.4,249.8L120.8,250.2L124.2,249.0L127.4,247.2L128.8,243.7L131.4,241.6L134.8,240.4L134.0,242.6L133.7,245.2L136.1,249.0L139.3,251.0L136.2,252.8L145.3,253.4L158.3,253.4L166.6,252.5L174.8,250.2L181.8,248.5L192.8,247.2L202.1,247.2L211.5,247.2L221.0,246.7L230.7,245.7L241.0,244.2L246.3,243.4L250.3,244.7L259.2,245.7L263.2,246.7L269.5,244.7L279.7,244.0L290.2,243.2L299.7,243.4L308.7,244.0L319.1,243.5L328.0,244.0L335.1,245.7L342.2,247.2L349.0,248.5L340.1,253.1L348.1,253.4L348.1,300L37.5,300Z" fill="#dcdff3" stroke="#fff" stroke-width=".5" stroke-linejoin="round"/><path d="M67.9,110.0L69.4,107.1L70.8,107.1L70.3,104.9L73.0,104.0L74.3,102.9M73.0,104.0L72.3,107.4L73.5,107.8M71.8,110.2L73.5,107.8M73.6,112.7L75.0,111.2L77.6,110.0L80.2,109.1M75.9,116.2L78.6,116.6M79.3,121.7L79.9,119.1M70.5,111.2L71.8,110.2L73.7,112.0M96.9,100.6L96.3,103.6M95.5,114.0L93.4,118.2L93.7,122.8L96.8,123.7L100.2,125.2L100.2,132.1L100.8,134.5M100.8,134.5L96.8,133.5L97.2,138.6L96.6,144.5M84.4,133.9L88.2,136.1L89.2,136.9L91.7,141.0L96.6,144.5M82.4,143.0L84.3,146.0L85.2,143.0L88.8,139.5L89.2,136.9M96.6,144.5L92.5,146.0L91.4,150.6L93.3,154.3L96.4,154.3L96.5,157.0L98.0,157.0M98.0,157.0L99.3,159.8L99.4,164.3L99.3,168.9L98.4,170.3M98.0,157.0L103.6,154.8L104.3,158.9L110.7,162.0L111.5,166.5L114.3,166.7L115.1,169.8L115.3,173.0M115.3,173.0L110.1,174.3L109.6,177.3L107.2,177.5L104.1,178.4L102.1,176.1L100.9,172.5L99.3,168.9M115.3,173.0L116.1,177.1L118.9,177.7L121.2,180.5L121.2,183.3L117.3,183.1L116.5,186.1L119.9,186.3L121.2,183.3M109.6,177.3L113.7,180.5L117.3,183.1M121.2,183.3L122.8,185.8L120.4,188.0L118.7,191.3L119.0,196.1L119.1,197.7M118.7,191.3L121.7,192.7L125.0,196.4L125.3,197.4M104.1,178.4L102.6,181.4L103.6,185.8L103.0,191.0L103.7,196.1L104.8,201.1L105.4,206.0L106.4,210.8L108.4,215.4L109.4,219.9L110.0,222.9L111.8,225.0L115.9,226.0L116.7,226.7L118.2,229.7M110.7,121.0L108.7,125.6L109.4,127.1L110.4,127.4L110.3,132.1L111.6,134.3L115.1,133.0L117.8,132.4L120.3,132.6L121.9,129.1M109.4,127.1L106.5,129.3L104.2,129.1L104.8,132.1L102.7,135.2L100.8,134.5M114.3,125.8L113.1,129.3L115.1,133.0M118.7,126.0L117.8,132.4M190.0,73.8L191.3,78.2L188.2,80.7L185.7,82.8L181.5,84.7L181.5,87.1M181.5,86.4L175.9,86.4M181.5,87.1L181.4,89.4L177.1,89.4L176.9,93.8L175.6,94.7L175.5,97.7L170.2,97.7M181.5,87.1L186.5,91.1L194.4,98.1L197.1,100.4L197.2,101.8L198.4,101.6L198.5,105.8L197.5,108.3L194.2,109.1L193.1,109.2L192.1,109.1L190.1,110.5L188.7,111.6L187.0,112.5L185.7,114.9L185.3,117.5M186.5,91.1L184.3,91.1L185.4,106.3L185.6,108.2L180.0,108.3L177.3,108.0L176.3,109.4M170.5,106.3L173.2,106.2L176.3,109.4L177.3,113.8L174.2,113.4L170.1,113.8M170.0,111.6L173.8,111.6L173.8,112.3L170.0,112.5M172.3,116.4L174.2,113.4M177.3,113.8L181.5,116.4L181.9,117.8L182.4,117.5L185.3,117.5M172.3,116.4L174.1,115.1L174.2,113.4M203.5,70.9L203.1,74.5L202.3,76.0L204.3,78.9L205.0,81.9L205.8,88.0L205.1,89.0L206.0,92.0L208.7,93.8M205.0,81.9L206.0,79.5L207.4,77.2M208.7,93.8L202.8,98.6L200.6,100.9L198.4,101.6M208.7,93.8L211.6,95.4L212.6,94.7L213.0,97.3L214.2,99.3L213.7,105.6L211.1,110.0L211.3,111.4M212.6,94.7L224.9,100.9L225.2,107.8L223.6,107.8L222.7,112.7L223.5,116.4L225.2,120.6M224.7,79.5L226.0,96.4M224.9,100.9L224.9,100.0L226.2,100.0L226.0,96.4M226.0,96.4L241.8,96.4M197.7,115.1L198.2,111.8L202.3,112.7L205.7,113.1L209.1,112.3L211.3,111.4L212.1,113.8M193.1,109.2L194.2,112.2L195.8,113.8L197.7,115.1M189.1,127.3L188.4,124.1L189.1,119.1L189.0,116.4M185.3,117.5L189.0,118.4M189.0,116.4L192.7,116.2L194.2,116.4L193.9,117.5L193.5,121.0L193.6,123.9L194.4,125.4M195.0,125.2L195.0,120.1L193.9,117.5M196.5,124.8L196.5,120.1L197.7,117.7L197.7,115.1M194.2,116.4L195.8,113.8M182.5,128.5L181.4,124.7L181.4,122.6L182.4,117.5M177.0,123.9L178.7,121.0L180.1,123.0L181.4,122.6M174.6,120.1L177.8,118.2L178.7,121.0M204.5,128.4L205.6,124.7L209.0,123.7L211.2,118.2L212.1,113.8M212.1,113.8L213.3,118.2L211.7,118.9L214.0,122.8L212.7,125.6L212.7,128.4L215.1,132.6M206.3,132.4L211.1,132.6L215.1,132.6L214.9,133.5M206.3,134.8L208.3,134.8L208.3,132.4M214.0,122.8L218.8,120.1L221.5,119.1L223.5,116.4M225.2,120.6L227.5,122.3L230.4,127.3M230.4,127.3L227.1,127.4L223.7,129.1L219.6,127.3L218.4,128.7L218.4,130.2L215.1,132.6M218.4,130.2L217.3,136.1L215.1,140.4L214.8,144.1L212.6,145.8L210.7,145.2L209.5,147.4M211.1,132.6L212.5,134.5L211.9,136.7L212.7,137.8L212.6,140.2L210.0,141.0L208.9,143.2L208.1,144.1M225.2,120.6L226.3,120.4L229.0,119.1L231.1,119.5L233.8,117.7L236.9,115.1L238.0,114.2L238.0,116.9L239.4,119.1M242.1,109.8L241.4,113.4L240.4,116.6L239.4,119.1L239.2,121.2L238.0,122.1L241.3,126.7L242.1,128.2M242.1,109.8L244.3,109.6L247.0,110.0L250.5,113.6L251.4,113.3M250.5,113.6L249.8,116.4L251.2,116.6M251.8,115.5L251.2,116.6L251.6,119.1L254.4,121.0L258.5,121.9L254.6,127.4L250.5,128.9L250.4,129.5L249.1,129.5M242.1,128.2L243.5,128.5L245.2,130.0L247.1,130.4L249.1,129.5M242.1,109.8L242.6,105.4L244.5,103.6M249.1,129.5L249.2,138.4L249.9,139.9M242.1,128.2L239.5,128.9L240.2,130.6L240.9,133.5L239.6,136.3L239.4,138.6M235.3,130.2L235.9,132.8L233.5,135.6L233.5,139.3M230.4,127.3L233.3,128.5L235.3,130.2L239.5,128.9M239.4,138.6L244.6,142.4L246.6,145.4M233.5,139.3L234.8,138.6L239.4,138.6M233.5,139.3L233.0,141.5L233.1,144.9L233.3,148.7L234.8,152.1M233.0,141.5L235.2,141.1L234.8,138.6M233.1,144.9L235.1,142.8L235.2,141.1M234.8,152.1L237.8,154.1L239.3,154.3L239.9,157.9L243.9,158.3L247.9,155.9M234.8,152.1L232.4,152.4L231.6,153.9L231.7,158.7L233.4,159.2L233.3,161.4L229.8,158.5L226.1,157.6L225.4,156.8L223.1,157.4L222.7,150.2L219.5,149.7L217.5,151.5L215.6,147.6L210.6,147.6L209.5,147.4M225.4,156.8L225.4,160.7L222.7,160.7L222.5,166.5L224.3,169.1L226.8,169.4M208.7,168.5L211.6,168.7L217.7,168.7L224.3,169.1M226.8,169.4L229.1,169.6L231.8,166.0L233.9,165.4L233.7,164.0L237.8,162.5L237.2,161.8L238.1,159.6L238.2,156.7L237.8,154.1M239.9,157.9L240.2,161.6L241.4,164.2L240.3,168.1L239.2,166.5L239.5,163.6L237.8,162.5M233.9,165.4L237.2,167.4L236.6,171.6L236.0,175.7L234.3,177.7L231.8,177.3L229.7,175.2L227.9,172.5L226.8,169.4M234.3,177.7L234.9,181.4L234.6,183.8L235.7,185.4M226.8,169.4L221.0,170.3L220.7,177.0L219.4,177.0L219.1,181.9L219.9,185.4L222.4,184.2L226.2,183.5L228.3,180.0L231.8,177.3M219.1,181.9L218.7,188.2L215.3,188.7L214.2,188.5M227.6,190.3L229.7,188.5L230.7,190.1L228.7,192.0L227.6,190.3M234.6,183.8L233.4,184.0L233.0,185.4L234.5,185.8M182.1,62.8L184.8,62.8L184.4,65.8L183.6,66.5L184.2,68.7L183.6,70.4M190.7,60.5L193.6,61.4L196.6,62.0M195.6,49.0L197.6,50.5L199.4,51.3L202.2,52.0L201.6,54.1L199.8,56.2L201.0,56.6L200.6,57.8L201.7,59.8M200.8,46.0L200.4,47.8L199.6,49.4L199.4,51.3M196.6,48.5L198.4,48.4L199.6,49.4M202.2,43.7L203.6,43.8M208.5,45.1L209.3,49.1L206.6,50.1L208.6,52.4L207.8,54.2L203.9,54.2L201.6,54.1M201.0,56.6L203.3,56.5L205.0,55.1L203.9,54.2M205.0,55.1L207.0,55.0L208.8,55.7L208.8,57.1M209.3,49.1L211.9,50.0L214.2,51.3L218.5,51.9M208.6,52.4L212.2,52.6L212.5,53.5L214.2,51.3M212.5,53.5L211.5,55.1L208.8,55.7M212.5,53.5L214.5,53.8L216.3,52.7L218.2,52.9M214.4,44.4L217.7,44.4L218.6,45.1L219.3,46.7L219.3,48.4L219.9,49.4L218.6,51.3L218.5,51.9L218.2,52.9M215.4,42.1L219.5,41.7L221.5,42.6L223.1,42.1L222.2,40.4L221.9,40.3L219.2,39.6L218.5,39.8M221.9,40.3L221.5,38.0L222.0,37.7M217.7,44.4L217.5,43.6L215.8,43.3M218.6,45.1L220.9,43.7L221.5,42.6M223.1,42.1L226.2,42.8L226.6,44.0L228.9,45.7L227.7,47.6L227.2,48.7M219.3,48.4L223.1,48.4L227.2,48.7M227.2,48.7L231.3,48.0L233.1,50.0L236.0,50.7L238.3,51.1L238.6,53.8L237.2,54.8M218.2,52.9L221.6,53.9L223.4,53.0L225.9,57.2L227.8,57.7M223.4,53.0L226.5,53.6L227.8,55.9L225.9,57.2M218.2,52.9L217.3,56.2L216.5,56.3L219.7,58.8L219.4,59.5L224.8,59.4L226.8,60.0M208.8,57.1L210.8,57.2L212.0,55.7L211.5,55.1M212.0,55.7L214.8,56.6L216.5,56.3M210.8,57.2L211.4,57.7L211.8,59.2L214.0,61.2L215.0,61.9M211.4,57.7L215.2,58.0L215.7,58.1M214.8,56.6L215.2,58.1L215.9,60.3L217.1,61.4L218.6,62.2L219.7,62.2L219.4,59.5M215.0,61.9L215.9,60.3M216.2,62.8L217.1,61.4M219.7,62.2L220.5,63.8L224.4,63.8L224.5,63.1L226.5,62.6M217.2,66.3L218.3,64.5L220.5,63.8M216.2,62.8L217.4,62.3L217.6,64.2L218.3,64.5M217.4,62.3L218.6,62.2M204.8,38.4L205.4,35.9L205.0,33.0L207.0,30.8L208.6,28.7L210.1,27.7L212.1,27.2L213.0,26.9L215.2,27.4L215.2,28.3L216.2,30.4M213.0,26.9L217.0,26.5L219.4,26.2L220.2,27.2L220.0,27.4L221.5,28.5L220.8,29.3L222.2,30.5L222.2,31.5L224.5,33.7L221.5,36.5M184.9,43.6L184.1,44.2L185.9,44.8M242.9,63.4L245.5,64.1L248.8,62.8L251.3,63.0M245.5,64.1L247.3,63.9L249.9,67.6L247.5,66.3M240.5,60.5L245.3,61.7L248.7,62.8M249.9,67.6L251.5,66.6L253.0,68.4M238.0,72.3L238.1,74.7L237.3,77.2L238.1,76.8L241.9,76.7L244.7,75.0L245.4,70.5M238.1,74.7L238.9,75.3L238.1,76.8M237.9,77.8L242.5,78.7L240.1,79.9L241.6,81.6L239.3,83.8L237.9,83.3L238.2,79.9L237.9,77.8M238.1,76.8L237.9,77.8M241.9,76.7L242.5,78.7M242.5,78.7L244.3,79.2L246.7,80.6L250.5,83.8L252.9,84.0L253.9,82.4L254.6,82.4M252.9,84.0L254.3,85.0L255.5,85.0M248.4,70.4L250.3,72.7L250.1,75.7L251.3,77.3L253.9,79.4L254.4,81.6M250.5,106.5L250.9,104.7L255.3,105.1L256.8,105.3L258.7,102.5L262.5,101.8L266.3,100.0L266.8,96.4L265.9,95.2L262.4,94.8L260.8,92.5M262.5,101.8L264.4,106.2M266.8,96.4L266.9,91.3L266.2,89.4M259.6,91.7L260.2,91.8M259.6,70.2L262.1,68.9L266.2,69.9L269.0,71.3L269.2,75.7L270.6,79.9L271.8,80.1L271.2,82.8L273.5,83.5L278.2,82.6L277.9,80.7L281.2,79.2L281.8,76.7L282.4,75.2L281.9,71.5L285.7,70.4M271.2,82.8L275.1,87.3L275.5,88.3L273.7,90.8M269.0,71.3L273.2,71.8L275.2,70.0L277.2,70.7L279.4,69.7L281.1,69.2L281.8,71.0L285.7,70.4M256.6,62.5L259.8,63.8L258.8,58.0L261.5,57.1L265.0,58.9L263.0,61.4L265.4,63.9L268.9,65.8L275.2,70.0M256.1,63.0L256.6,62.5M265.0,58.9L270.0,60.0L271.8,61.1L275.2,64.2L277.7,62.6L278.1,62.2M278.1,62.2L280.7,61.1L281.5,60.8L288.4,61.2L289.3,62.6L282.9,66.0L283.0,66.6L280.7,66.9L278.7,65.5L278.1,62.2M277.2,70.7L276.0,67.4L276.8,65.5L278.7,65.5M283.0,66.6L285.7,70.4M250.0,55.9L246.3,52.9L246.5,49.8L249.9,48.1L254.9,49.5L259.4,49.5L262.0,49.1L259.8,45.1L263.8,44.4L267.5,43.0L270.6,44.8L273.4,44.9L276.7,44.4L283.0,49.4L286.7,49.1L289.5,50.8L292.5,51.7M292.5,51.7L292.1,54.4L289.1,54.7L289.6,57.2L287.4,58.0L289.3,62.6M292.5,51.7L296.5,49.4L303.7,50.0L303.1,47.6L307.6,48.7L313.8,50.1L321.9,51.1L325.4,50.7L325.9,53.3L332.3,55.4L328.9,56.9L324.8,57.8L326.0,60.0L319.5,63.3L313.8,61.7L308.3,61.5L300.0,57.7L298.5,55.1L292.5,51.7M325.4,50.7L328.1,50.4L326.9,47.0L329.0,45.6L337.7,50.8L344.1,53.9L348.0,52.9L349.4,57.7L348.7,59.5L349.6,62.0M349.6,62.0L346.9,62.6L345.6,63.1L344.4,65.8M349.4,69.4L350.7,68.1M285.7,70.4L292.2,75.2L293.6,80.4L297.1,82.1L307.2,86.1L308.6,87.1L312.8,87.8L312.5,86.2L314.5,84.0L319.0,85.4L321.2,86.8L322.0,89.7L321.6,92.7L324.5,96.3L327.4,97.3L328.3,95.7L332.0,94.1L334.1,95.0L336.4,97.3M297.1,82.1L296.4,84.5L301.2,86.9L307.9,88.7L307.2,86.1M308.6,87.1L310.0,88.2L312.8,87.8M282.8,93.4L286.3,92.2L283.4,87.6L286.9,84.2L288.2,80.7L287.3,77.7L290.2,73.2M311.0,96.8L308.8,92.0L307.9,88.7L310.3,89.4L313.8,91.1L313.3,93.8L315.7,98.2M315.7,98.2L315.8,96.4L315.8,92.9L317.0,90.3L319.0,85.4M327.4,97.3L326.4,99.5L323.8,100.6L323.5,102.7L326.2,106.5L325.7,109.1L327.7,113.4L327.6,117.8M326.4,99.5L328.2,100.9L328.7,104.5L329.9,103.3L332.4,103.1L334.0,106.3L335.9,110.2L338.4,109.6L339.1,114.0L337.1,115.1L335.3,117.5M328.3,95.7L333.0,100.0L331.9,101.3L333.9,102.5L338.4,109.6M335.9,110.2L332.1,111.6L333.0,115.1M330.1,124.7L332.9,125.2M343.6,133.0L346.9,134.5L350.5,134.1L352.0,128.7L354.4,128.9M386.7,141.5L385.6,153.5M362.3,153.9L363.8,153.3" fill="none" stroke="#fff" stroke-width=".55" stroke-linejoin="round" stroke-linecap="round"/><path d="M224.5,65.8L225.4,68.2L226.7,70.7L228.9,71.2L230.8,71.8L232.6,71.5L235.2,71.8L237.6,71.2L238.0,72.3L240.0,71.0L244.9,70.4L248.0,70.4L247.2,66.6L245.5,64.2L242.9,63.4L238.8,64.2L234.9,62.6L230.9,63.9L227.9,64.2L226.5,62.6L224.7,63.0Z" fill="#e9d6f1" stroke="#fff" stroke-width=".5"/><path d="M49.5,52.9L51.5,52.7L52.3,52.0L83.9,52.0L84.3,52.4L87.0,53.0L89.6,53.5L91.1,53.0L94.0,55.6L94.6,56.0L94.9,56.8L95.7,57.5L94.3,61.1L92.8,62.5L93.3,63.1L98.2,61.4L98.6,60.6L101.3,60.1L102.4,59.2L104.5,58.0L108.5,58.0L109.6,57.4L110.6,56.2L112.6,54.4L113.7,54.5L113.3,56.8L113.7,58.0L113.7,58.3L110.9,59.4L109.2,60.1L108.0,61.5L108.4,63.0L106.8,63.4L103.7,64.4L102.8,65.0L101.9,66.6L100.5,67.8L100.4,66.6L99.5,66.9L98.6,69.1L98.4,70.7L98.2,72.7L96.7,74.3L94.5,75.7L92.4,77.0L89.7,78.9L88.4,81.2L88.4,85.0L88.3,88.0L87.2,90.8L86.3,90.8L85.9,88.9L85.3,86.2L85.8,84.2L84.7,82.3L82.7,82.8L80.8,81.8L78.7,81.9L77.3,83.7L75.9,83.8L74.4,83.1L71.9,83.0L69.8,84.0L66.4,86.4L65.3,89.4L63.3,88.5L63.3,86.6L62.7,84.0L62.1,82.8L60.6,83.0L59.3,84.2L58.1,83.1L56.9,79.4L54.7,79.4L54.4,80.2L50.8,80.2L46.8,78.2L43.9,78.2L43.4,75.7L41.0,74.8L41.1,71.3L41.4,69.4L41.2,66.9L41.5,65.3L43.4,62.6L43.9,61.1L47.9,56.2ZM60.6,26.6L47.1,36.8L48.6,37.2L49.2,38.5L50.4,39.4L50.2,41.6L50.9,43.6L50.9,42.5L50.5,40.3L49.2,39.0L47.8,37.5L43.5,37.1L40.2,36.5L34.5,38.1L31.3,39.0L26.6,40.7L22.1,42.2L16.7,43.6L12.5,44.4L15.9,43.3L20.8,42.0L26.3,39.6L27.1,38.6L23.2,38.7L24.9,37.1L23.5,35.9L24.2,34.7L27.4,33.5L32.3,32.6L33.6,31.7L29.5,31.8L28.4,30.6L33.4,29.7L36.5,29.3L36.0,28.7L35.3,27.7L39.8,26.7L46.5,25.5L48.7,25.0L52.1,25.5L55.8,26.0Z" fill="#9651d0" stroke="#9651d0" stroke-width=".4" stroke-linejoin="round"/></svg></div><div class="abs" style="left:62px;top:525px;width:32px;height:65px;background:#fff;border-radius:4px;box-shadow:0 1px 4px rgba(10,21,81,.15)"><div class="abs" style="left:0;top:32px;width:32px;height:1px;background:#c8ceed"></div><svg class="abs" style="left:0;top:0" width="32" height="65" viewBox="0 0 32 65" stroke="#343b6c" stroke-width="1.4" fill="none"><path d="M11 16.5H21M16 11.5V21.5M11 48.7H21"/></svg></div><svg class="abs" style="left:55px;top:620px" width="20" height="14" viewBox="0 0 20 14"><rect width="20" height="14" fill="#fff"/><g fill="#dc3c3c"><rect y="0.00" width="20" height="1.08"/><rect y="2.15" width="20" height="1.08"/><rect y="4.31" width="20" height="1.08"/><rect y="6.46" width="20" height="1.08"/><rect y="8.62" width="20" height="1.08"/><rect y="10.77" width="20" height="1.08"/><rect y="12.92" width="20" height="1.08"/></g><rect width="12.800" height="7.54" fill="#3c4ba8"/><g fill="#fff" opacity=".7"><circle cx="1.10" cy="0.85" r=".42"/><circle cx="2.87" cy="0.85" r=".42"/><circle cx="4.64" cy="0.85" r=".42"/><circle cx="6.41" cy="0.85" r=".42"/><circle cx="8.18" cy="0.85" r=".42"/><circle cx="9.95" cy="0.85" r=".42"/><circle cx="11.72" cy="0.85" r=".42"/><circle cx="1.98" cy="1.82" r=".42"/><circle cx="3.75" cy="1.82" r=".42"/><circle cx="5.52" cy="1.82" r=".42"/><circle cx="7.29" cy="1.82" r=".42"/><circle cx="9.06" cy="1.82" r=".42"/><circle cx="10.83" cy="1.82" r=".42"/><circle cx="1.10" cy="2.79" r=".42"/><circle cx="2.87" cy="2.79" r=".42"/><circle cx="4.64" cy="2.79" r=".42"/><circle cx="6.41" cy="2.79" r=".42"/><circle cx="8.18" cy="2.79" r=".42"/><circle cx="9.95" cy="2.79" r=".42"/><circle cx="11.72" cy="2.79" r=".42"/><circle cx="1.98" cy="3.76" r=".42"/><circle cx="3.75" cy="3.76" r=".42"/><circle cx="5.52" cy="3.76" r=".42"/><circle cx="7.29" cy="3.76" r=".42"/><circle cx="9.06" cy="3.76" r=".42"/><circle cx="10.83" cy="3.76" r=".42"/><circle cx="1.10" cy="4.73" r=".42"/><circle cx="2.87" cy="4.73" r=".42"/><circle cx="4.64" cy="4.73" r=".42"/><circle cx="6.41" cy="4.73" r=".42"/><circle cx="8.18" cy="4.73" r=".42"/><circle cx="9.95" cy="4.73" r=".42"/><circle cx="11.72" cy="4.73" r=".42"/><circle cx="1.98" cy="5.70" r=".42"/><circle cx="3.75" cy="5.70" r=".42"/><circle cx="5.52" cy="5.70" r=".42"/><circle cx="7.29" cy="5.70" r=".42"/><circle cx="9.06" cy="5.70" r=".42"/><circle cx="10.83" cy="5.70" r=".42"/><circle cx="1.10" cy="6.67" r=".42"/><circle cx="2.87" cy="6.67" r=".42"/><circle cx="4.64" cy="6.67" r=".42"/><circle cx="6.41" cy="6.67" r=".42"/><circle cx="8.18" cy="6.67" r=".42"/><circle cx="9.95" cy="6.67" r=".42"/><circle cx="11.72" cy="6.67" r=".42"/></g></svg><span class="abs" style="left:84.60px;top:617px;font-size:14.5px;line-height:20px;letter-spacing:-1.350px;color:#343b6c;white-space:nowrap">USA</span><span class="abs" style="left:452.20px;top:618px;font-size:13.5px;line-height:20px;letter-spacing:-1.300px;color:#0a1551;white-space:nowrap;font-weight:bold">12</span><div class="abs hr" style="left:53px;top:647px;width:414px"></div><svg class="abs" style="left:55px;top:661px" width="20" height="14" viewBox="0 0 20 14"><rect width="20" height="14" fill="#e0322c"/><circle cx="8.800" cy="6.900" r="4.200" fill="#fff"/><circle cx="10.100" cy="6.900" r="3.300" fill="#e0322c"/><path d="M15.700 6.900L12.900 7.800L14.650 5.400V8.400L12.900 6Z" fill="#fff"/></svg><span class="abs" style="left:85.60px;top:658px;font-size:14.5px;line-height:20px;letter-spacing:-1.800px;color:#343b6c;white-space:nowrap">TUR</span><span class="abs" style="left:459.95px;top:659px;font-size:13.5px;line-height:20px;letter-spacing:0.000px;color:#0a1551;white-space:nowrap;font-weight:bold">1</span><span class="abs" style="left:524.60px;top:289px;font-size:15.5px;line-height:20px;letter-spacing:-0.467px;color:#0a1551;white-space:nowrap;font-weight:bold">Browser</span><div class="abs pill" style="left:592px;top:288px;width:59px"></div><span class="abs" style="left:602.90px;top:288px;font-size:12px;line-height:20px;letter-spacing:0.067px;color:#0a1551;white-space:nowrap"><b>1</b> Total</span><div class="abs hr" style="left:505px;top:326px;width:452px"></div><svg class="abs" style="left:527px;top:353px" width="20" height="20" viewBox="-10 -10 20 20"><defs><linearGradient id="cb" x1="0" y1="0" x2="0" y2="1"><stop offset="0" stop-color="#62abea"/><stop offset="1" stop-color="#1968bd"/></linearGradient></defs><path d="M-8.550 -5.200A10 10 0 0 1 8.770 -4.800L0 -4.800L-4.160 2.400Z" fill="#e8483a"/><path d="M8.770 -4.800A10 10 0 0 1 -0.230 10L4.160 2.400L0 -4.800Z" fill="#fbd532"/><path d="M-0.230 10A10 10 0 0 1 -8.550 -5.200L-4.160 2.400L4.160 2.400Z" fill="#5cb75b"/><circle r="4.900" fill="#fff"/><circle r="3.950" fill="url(#cb)"/></svg><span class="abs" style="left:556.20px;top:353px;font-size:14.5px;line-height:20px;letter-spacing:0.040px;color:#343b6c;white-space:nowrap">Chrome</span><span class="abs" style="left:924.00px;top:354px;font-size:13.5px;line-height:20px;letter-spacing:-1.300px;color:#0a1551;white-space:nowrap;font-weight:bold">13</span><span class="abs" style="left:524.20px;top:556px;font-size:15.5px;line-height:20px;letter-spacing:-0.167px;color:#0a1551;white-space:nowrap;font-weight:bold">Operating System</span><div class="abs pill" style="left:662px;top:555px;width:59px"></div><span class="abs" style="left:673.50px;top:555px;font-size:12px;line-height:20px;letter-spacing:0.033px;color:#0a1551;white-space:nowrap"><b>1</b> Total</span><div class="abs hr" style="left:505px;top:593px;width:452px"></div><svg class="abs" style="left:527px;top:620px" width="20" height="20" viewBox="0 0 20 20"><rect width="20" height="20" rx="4" fill="#000"/><text x="10" y="6.6" font-family="Liberation Sans,sans-serif" font-size="4.6" font-weight="bold" fill="#fff" text-anchor="middle">mac</text><text x="10" y="15.8" font-family="Liberation Sans,sans-serif" font-size="10.5" fill="#fff" stroke="#fff" stroke-width=".25" text-anchor="middle">OS</text></svg><span class="abs" style="left:556.40px;top:620px;font-size:14.5px;line-height:20px;letter-spacing:-0.610px;color:#343b6c;white-space:nowrap">Mac OS X 10</span><span class="abs" style="left:924.00px;top:621px;font-size:13.5px;line-height:20px;letter-spacing:-1.300px;color:#0a1551;white-space:nowrap;font-weight:bold">13</span><div class="abs hl" style="left:31px;top:1px;width:460px;height:253px"></div><div class="abs hl" style="left:501px;top:0px;width:458px;height:255px"></div><div class="abs hl" style="left:31px;top:267px;width:458px;height:411px"></div><div class="abs hl" style="left:501px;top:267px;width:460px;height:253px"></div></div>
 <div class="abs hdr">
  <div class="abs hicon"><svg class="abs" style="left:8px;top:8px" width="20" height="20" viewBox="0 0 20 20" fill="none" stroke="#fff" stroke-width="1.9" stroke-linecap="round" stroke-linejoin="round"><path d="M2.4 3.1V17.6H17.300"/><path d="M6 14L9.200 10L12 11L16 5.800" stroke-width="2.2"/></svg></div>
  <span class="abs" style="left:66.57px;top:23px;font-size:15.8px;line-height:20px;letter-spacing:0.519px;color:#2c3365;white-space:nowrap;-webkit-text-stroke:0.35px #2c3365">Analytics</span><span class="abs" style="left:984.95px;top:22px;font-size:14px;line-height:20px;letter-spacing:0.323px;color:#343b6c;white-space:nowrap;-webkit-text-stroke:0.3px #343b6c">Data calculated at 09:25 AM</span>
 </div>
 <div class="abs track"></div><div class="abs thumb"></div>
 <div class="abs fb"><svg class="abs" style="left:13px;top:7px" width="18" height="17" viewBox="0 0 18 17" fill="none" stroke="#fff" stroke-width="1.5" stroke-linecap="round" stroke-linejoin="round"><path d="M7.5 12.2H3A1.8 1.8 0 0 1 1.2 10.4V3A1.8 1.8 0 0 1 3 1.2H14A1.8 1.8 0 0 1 15.8 3V6"/><path d="M9.3 14.9L10 12.3L14.6 7.7A1.2 1.2 0 0 1 16.4 9.4L11.8 14Z"/><circle cx="5.2" cy="6.6" r=".5" fill="#fff"/><circle cx="8.4" cy="6.6" r=".5" fill="#fff"/><circle cx="11.6" cy="6.6" r=".5" fill="#fff"/></svg><span class="abs" style="left:38.20px;top:5px;font-size:14.5px;line-height:20px;letter-spacing:-0.233px;color:#fff;white-space:nowrap">Give Feedback</span></div>
 <div class="abs" style="left:712px;top:600px;width:458px;height:114px;overflow:hidden"><div class="abs hl" style="left:0;top:0;width:458px;height:114px"></div></div>
</div>
</body></html>
